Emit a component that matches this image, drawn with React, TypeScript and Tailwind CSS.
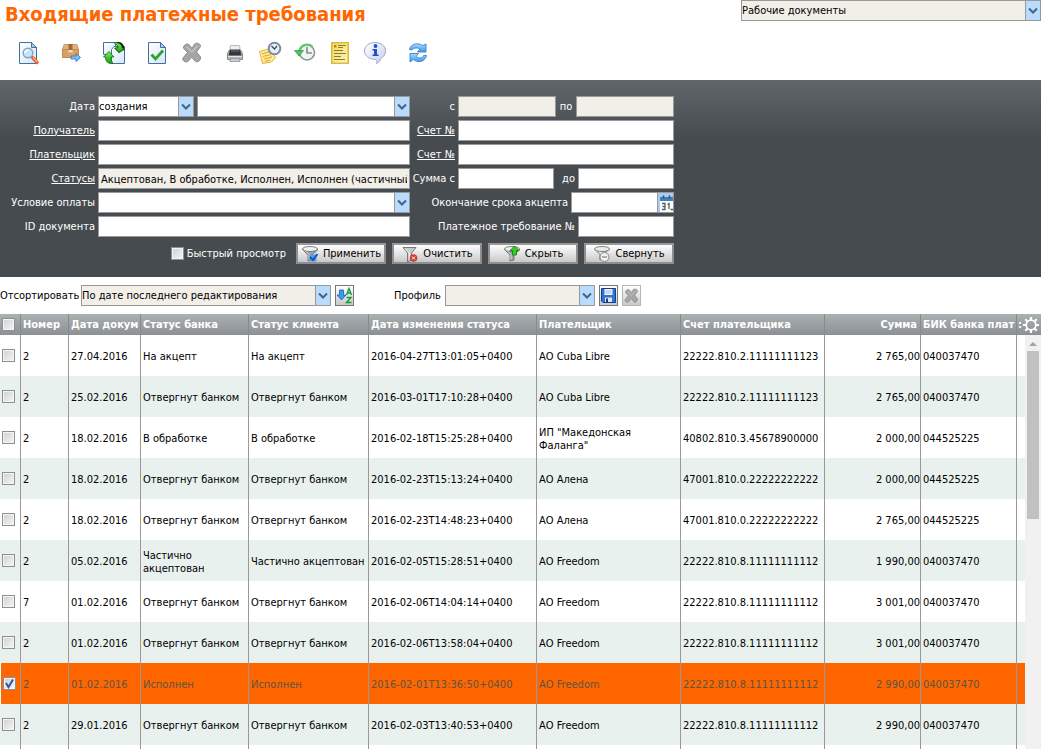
import { useState } from "react"
import type { ReactNode } from "react"
import clsx from "clsx"

type Payment = {
  id: number
  num: string
  date: string
  bankStatus: string
  clientStatus: string
  changed: string
  payer: string
  account: string
  sum: string
  bik: string
}

const payments: Payment[] = [
  { id: 1, num: "2", date: "27.04.2016", bankStatus: "На акцепт", clientStatus: "На акцепт", changed: "2016-04-27T13:01:05+0400", payer: "АО Cuba Libre", account: "22222.810.2.11111111123", sum: "2 765,00", bik: "040037470" },
  { id: 2, num: "2", date: "25.02.2016", bankStatus: "Отвергнут банком", clientStatus: "Отвергнут банком", changed: "2016-03-01T17:10:28+0400", payer: "АО Cuba Libre", account: "22222.810.2.11111111123", sum: "2 765,00", bik: "040037470" },
  { id: 3, num: "2", date: "18.02.2016", bankStatus: "В обработке", clientStatus: "В обработке", changed: "2016-02-18T15:25:28+0400", payer: "ИП \"Македонская Фаланга\"", account: "40802.810.3.45678900000", sum: "2 000,00", bik: "044525225" },
  { id: 4, num: "2", date: "18.02.2016", bankStatus: "Отвергнут банком", clientStatus: "Отвергнут банком", changed: "2016-02-23T15:13:24+0400", payer: "АО Алена", account: "47001.810.0.22222222222", sum: "2 000,00", bik: "044525225" },
  { id: 5, num: "2", date: "18.02.2016", bankStatus: "Отвергнут банком", clientStatus: "Отвергнут банком", changed: "2016-02-23T14:48:23+0400", payer: "АО Алена", account: "47001.810.0.22222222222", sum: "2 765,00", bik: "044525225" },
  { id: 6, num: "2", date: "05.02.2016", bankStatus: "Частично акцептован", clientStatus: "Частично акцептован", changed: "2016-02-05T15:28:51+0400", payer: "АО Freedom", account: "22222.810.8.11111111112", sum: "1 990,00", bik: "040037470" },
  { id: 7, num: "7", date: "01.02.2016", bankStatus: "Отвергнут банком", clientStatus: "Отвергнут банком", changed: "2016-02-06T14:04:14+0400", payer: "АО Freedom", account: "22222.810.8.11111111112", sum: "3 001,00", bik: "040037470" },
  { id: 8, num: "2", date: "01.02.2016", bankStatus: "Отвергнут банком", clientStatus: "Отвергнут банком", changed: "2016-02-06T13:58:04+0400", payer: "АО Freedom", account: "22222.810.8.11111111112", sum: "3 001,00", bik: "040037470" },
  { id: 9, num: "2", date: "01.02.2016", bankStatus: "Исполнен", clientStatus: "Исполнен", changed: "2016-02-01T13:36:50+0400", payer: "АО Freedom", account: "22222.810.8.11111111112", sum: "2 990,00", bik: "040037470" },
  { id: 10, num: "2", date: "29.01.2016", bankStatus: "Отвергнут банком", clientStatus: "Отвергнут банком", changed: "2016-02-03T13:40:53+0400", payer: "АО Freedom", account: "22222.810.8.11111111112", sum: "2 990,00", bik: "040037470" },
]

/* ---------- icons ---------- */

// gradients shared by the toolbar icons
const IconDefs = () => (
  <svg className="absolute" width="0" height="0" aria-hidden="true">
    <defs>
      <linearGradient id="g-page" x1="0" y1="0" x2="1" y2="1">
        <stop offset="0" stopColor="#ffffff" />
        <stop offset="1" stopColor="#d3e6f8" />
      </linearGradient>
      <linearGradient id="g-blue" x1="0" y1="0" x2="0" y2="1">
        <stop offset="0" stopColor="#a5dcfb" />
        <stop offset="1" stopColor="#3f94e6" />
      </linearGradient>
      <linearGradient id="g-green" x1="0" y1="0" x2="0" y2="1">
        <stop offset="0" stopColor="#7cf04c" />
        <stop offset="1" stopColor="#169b1f" />
      </linearGradient>
      <linearGradient id="g-yellow" x1="0" y1="0" x2="1" y2="1">
        <stop offset="0" stopColor="#f4dc5a" />
        <stop offset="1" stopColor="#fcf3bd" />
      </linearGradient>
      <linearGradient id="g-bubble" x1="0" y1="0" x2="1" y2="1">
        <stop offset="0" stopColor="#ffffff" />
        <stop offset="1" stopColor="#c9cdf2" />
      </linearGradient>
    </defs>
  </svg>
)

const DocPage = () => (
  <>
    <path d="M3.500 1.500h12l5 5v16h-17z" fill="url(#g-page)" stroke="#456f9e" />
    <path d="M15.500 1.500v5h5z" fill="#a9cdf0" stroke="#456f9e" />
  </>
)

const SearchDocIcon = () => (
  <svg width="24" height="24" viewBox="0 0 24 24">
    <DocPage />
    <path d="m17 17 4 4.500" stroke="#e5622b" strokeWidth="3.400" strokeLinecap="round" />
    <path d="m17 16.500 4 4.500" stroke="#f8b267" strokeWidth="1.200" />
    <path d="m15 15 1.500 1.500" stroke="#777" strokeWidth="2" />
    <circle cx="12" cy="12" r="4.800" fill="#bfe6fb" stroke="#8aa0b4" strokeWidth="1.400" />
    <path d="M9 12a3.500 3.500 0 0 1 3.500-3" stroke="#fff" strokeWidth="1.400" fill="none" />
  </svg>
)

const BoxIcon = () => (
  <svg width="24" height="24" viewBox="0 0 24 24">
    <path d="M5 3.500h13l1.500 5h-16z" fill="#e3b27a" stroke="#cf9c62" strokeLinejoin="round" />
    <path d="M3.500 8.500h16v8h-16z" fill="#d8a163" stroke="#c58b4c" strokeLinejoin="round" />
    <path d="M9.500 3h4v6h-4z" fill="#9b6a3f" />
    <path d="M9.500 9h4v3l-2-1-2 1z" fill="#f3dfc2" />
    <path d="M12 15h5v-2.500l4.500 4-4.500 4V18h-5z" fill="#7fbdf3" stroke="#3877bd" strokeWidth=".9" />
  </svg>
)

const SwapIcon = () => (
  <svg width="24" height="24" viewBox="0 0 24 24">
    <path d="M1.500 1.500h12v12h-12z" fill="url(#g-page)" stroke="#456f9e" />
    <path d="M9.500 8.500 12 5.500h10.500v17h-13z" fill="url(#g-page)" stroke="#456f9e" />
    <path d="M11 1h6c4 .5 5.500 4 5.500 9l-1-1-4.500 3-5-5 3.500-.5C15.500 4.500 14 2 11 1z" fill="#0b1a0b" />
    <path d="M11.500 1.500c5 0 8.500 1.500 8.500 5.500l2 .5-4.500 4L13 7h3c0-2.500-1.500-4-4.500-5.500z" fill="url(#g-green)" stroke="#137a17" strokeWidth=".7" />
    <path d="M11.500 22.500c-4.500.5-8-1-8-6.500H1.500l5.500-5.500L12 16H9c0 3 .5 5 2.500 6.500z" fill="url(#g-green)" stroke="#137a17" strokeWidth=".9" />
  </svg>
)

const CheckDocIcon = () => (
  <svg width="24" height="24" viewBox="0 0 24 24">
    <DocPage />
    <path d="m6.500 13.500 4 4.500L18 9.500" fill="none" stroke="#2da52a" strokeWidth="2.800" />
  </svg>
)

const CrossIcon = ({ size = 24 }: { size?: number }) => (
  <svg width={size} height={size} viewBox="0 0 24 24">
    <path d="M3.500 7C3.500 4 6.500 2 9 3.500l3 4L14.500 3C17 1 21 3 20.500 5.500L16.500 11l4 5c.5 3.500-2.500 5.500-5 4.500l-4-4.500-3.500 4.500C5 22 2 19.500 3 17l4.500-5.500z" fill="#a6a6a6" stroke="#8c8c8c" strokeLinejoin="round" />
    <path d="M6.500 5.500 12 11l5.500-6" fill="none" stroke="#c6c6c6" strokeWidth="1.200" />
  </svg>
)

const PrinterIcon = () => (
  <svg width="24" height="24" viewBox="0 0 24 24">
    <path d="M7.500 4.500h9l1 6h-11z" fill="#eaf0f6" stroke="#b5bcc4" />
    <path d="M4.500 12.500 6 9.500h12l1.500 3v6h-15z" fill="#b4b7bb" stroke="#84878b" />
    <path d="M7 8.500h10l1.500 6h-13z" fill="#34373b" />
    <path d="M8 10h8" stroke="#6a7078" />
    <path d="M5 15.500h14" stroke="#e2e4e6" />
    <path d="M7.500 17.500h9l.5 3H7z" fill="#c8ccd1" stroke="#8f9397" strokeWidth=".8" />
  </svg>
)

const NoteClockIcon = () => (
  <svg width="24" height="24" viewBox="0 0 24 24">
    <path d="m1.500 10.500 11-3 5 9-4 4.500-9 1.500z" fill="#fdeb8e" stroke="#e6b549" />
    <path d="m4 13 8-2.500M5 15.500l8-2M6 18l8-2M7 20.500l5-1.500" stroke="#dba336" />
    <circle cx="16.500" cy="7.500" r="5.800" fill="#e6f0fc" stroke="#7d8ba3" strokeWidth="2" />
    <path d="m13.500 5 3 3 2.500-3" fill="none" stroke="#3a4552" strokeWidth="1.200" />
  </svg>
)

const HistoryIcon = () => (
  <svg width="24" height="24" viewBox="0 0 24 24">
    <circle cx="14" cy="11.500" r="7.500" fill="#eff5f1" stroke="#8a958d" strokeWidth="1.600" />
    <path d="M14 6v6h5" fill="none" stroke="#5f6661" strokeWidth="1.200" />
    <path d="M19.500 5.500C16 2.500 8.500 2.500 6 10" fill="none" stroke="#63c672" strokeWidth="2.200" />
    <path d="M1.500 9.500h9L6 15z" fill="#4fc463" stroke="#2f9d45" strokeWidth=".8" />
  </svg>
)

const FormIcon = () => (
  <svg width="24" height="24" viewBox="0 0 24 24">
    <path d="M3.800 1.800h16.400v20.400H3.800z" fill="url(#g-yellow)" stroke="#d9bd3c" strokeWidth="1.600" />
    <path d="M10 4.500h8M10 6.500h5M6 9.500h9M6 12.500h12M6 15.500h7M6 18.500h11" stroke="#8a7d31" strokeWidth="1.200" />
    <path d="M6 4h2.500v2.500H6z" fill="#b08f18" />
  </svg>
)

const InfoIcon = () => (
  <svg width="24" height="24" viewBox="0 0 24 24">
    <path d="M12 1.500c6 0 10.500 3.500 10.500 8 0 4-2 6.500-5 8 0 2-1.500 4-4 5 .5-1.500.5-3-.5-4C6.500 18.500 1.500 15 1.500 10S6 1.500 12 1.500z" fill="url(#g-bubble)" stroke="#a3a6c9" />
    <circle cx="12.500" cy="5" r="1.900" fill="#1b50cf" />
    <path d="M9.500 8H14v5.500h1.500V15h-6v-1.500H11v-4H9.500z" fill="#1b50cf" />
  </svg>
)

const RefreshIcon = () => (
  <svg width="24" height="24" viewBox="0 0 24 24">
    <path d="M3.500 8.500c1-5.500 8.500-7.500 13-4l3.500-1.500v8h-8.500L14 8C10.500 6 7 7 6 9z" fill="url(#g-blue)" stroke="#3785d2" strokeLinejoin="round" strokeWidth=".9" />
    <path d="M20.500 14.500c-1 6-8.500 8-13 4L4 21v-8.500h8.500L10 15.500c3 2.500 6.500 1.500 7.500-1z" fill="url(#g-blue)" stroke="#3785d2" strokeLinejoin="round" strokeWidth=".9" />
  </svg>
)

const Funnel = () => (
  <>
    <path d="M1.500 4.500 7 10v6l4-1v-5l6-5.500z" fill="#9aa0a5" stroke="#63686c" strokeWidth=".8" />
    <ellipse cx="9" cy="4" rx="7.500" ry="2.500" fill="#eef0f1" stroke="#63686c" strokeWidth=".8" />
    <path d="M4 5.500 8 9.500v5" fill="none" stroke="#d9dcde" />
  </>
)

const ApplyIcon = () => (
  <svg width="18" height="18" viewBox="0 0 18 18">
    <Funnel />
    <path d="M8.500 9.500h7v7h-7z" fill="#5d9be8" />
    <path d="m9 12 3 3 4.500-6" fill="none" stroke="#1457b8" strokeWidth="2" />
  </svg>
)

const ClearIcon = () => (
  <svg width="18" height="18" viewBox="0 0 18 18">
    <path d="M2 2.500h13L10.500 8v7l-4 2V8z" fill="#c9cccf" stroke="#777" />
    <path d="m4.500 4 4 4.500V14" fill="none" stroke="#f7f7f7" />
    <circle cx="12.500" cy="13" r="3.800" fill="#cf3a3a" />
    <path d="m11 11.500 3 3m0-3-3 3" stroke="#fff" />
  </svg>
)

const HideIcon = () => (
  <svg width="18" height="18" viewBox="0 0 18 18">
    <Funnel />
    <path d="m11.500 1 4.500 4.500h-2.500V10h-4V5.500H7z" fill="#35d01e" stroke="#11770f" strokeWidth=".8" />
  </svg>
)

const CollapseIcon = () => (
  <svg width="18" height="18" viewBox="0 0 18 18">
    <path d="M1.500 4 7 9.500V15l3-1M16.500 4 11 8.500" fill="none" stroke="#777" />
    <ellipse cx="9" cy="4" rx="7.500" ry="2.500" fill="#e9ebec" stroke="#777" strokeWidth=".9" />
    <circle cx="11.500" cy="12" r="4.500" fill="#f1f1f1" stroke="#858585" />
    <path d="M9 12h5" stroke="#666" />
  </svg>
)

const SortIcon = () => (
  <svg width="17" height="17" viewBox="0 0 17 17">
    <path d="M3.500 3h4v5h2.500L5.500 13 1 8h2.500z" fill="#3c9af0" stroke="#1661b8" strokeWidth=".8" />
    <path d="m10.500 8 2.500-6.500L15.500 8M11.500 6h3M10.500 10.500h4.500l-4.500 5h5" fill="none" stroke="#169a35" strokeWidth="1.400" />
  </svg>
)

const SaveIcon = () => (
  <svg width="17" height="17" viewBox="0 0 17 17">
    <path d="M1.500 1.500h14v14H3l-1.500-1.500z" fill="#2f74d4" stroke="#123f8c" />
    <path d="M4.500 2h8v6h-8z" fill="#f4f7fb" />
    <path d="M5.500 4h6M5.500 6h6" stroke="#a7b5c7" />
    <path d="M5 10.500h7V15H5z" fill="#dde5ef" />
    <path d="M6 11.500h2V15H6z" fill="#173f7f" />
  </svg>
)

const CalendarIcon = () => (
  <svg width="15" height="19" viewBox="0 0 15 19">
    <path d="M0 0h15v19H0z" fill="#a9cdf2" />
    <path d="M2 7h13v12H2z" fill="#fff" />
    <path d="M2 4h13v4H2z" fill="#3b83b8" />
    <path d="M5.500 2.500v3M11.500 2.500v3" stroke="#35556f" strokeWidth="1.600" />
    <path d="M4 10.500h3v6H4M4.500 13.500H7M9.500 11.500l1.500-1V16M12.500 16.500H15" fill="none" stroke="#555b60" strokeWidth="1.300" />
  </svg>
)

const GearIcon = () => (
  <svg width="18" height="18" viewBox="0 0 18 18" fill="none" stroke="#fff">
    <circle cx="9" cy="9" r="4.800" strokeWidth="1.800" />
    <path d="M9 1v3M9 14v3M1 9h3M14 9h3M3.300 3.300l2.200 2.200M12.500 12.500l2.200 2.200M3.300 14.700l2.200-2.200M12.500 5.500l2.200-2.200" strokeWidth="2.200" />
  </svg>
)

/* ---------- controls ---------- */

const Select = ({ id, label, options, className, muted }: {
  id?: string
  label?: string
  options: string[]
  className?: string
  muted?: boolean
}) => (
  <span className={clsx("relative inline-block h-[21px]", className)}>
    <select
      id={id}
      aria-label={label}
      className={clsx(
        "block h-full w-full appearance-none border border-[#999] pt-px pr-4 text-black outline-none",
        muted ? "bg-[#f2eee8]" : "bg-white"
      )}
    >
      {options.map((o) => <option key={o}>{o}</option>)}
    </select>
    <span className="pointer-events-none absolute inset-y-px right-px flex w-[15px] items-center justify-center border-l border-[#999] bg-[#b9dcfc]">
      <svg width="10" height="8" viewBox="0 0 10 8">
        <path d="m1 1.500 4 4 4-4" fill="none" stroke="#456089" strokeWidth="2" />
      </svg>
    </span>
  </span>
)

const TextBox = ({ id, label, value = "", className, muted }: {
  id?: string
  label?: string
  value?: string
  className?: string
  muted?: boolean
}) => (
  <input
    id={id}
    type="text"
    aria-label={label}
    defaultValue={value}
    readOnly={muted}
    className={clsx(
      "h-[21px] min-w-0 border border-[#999] px-0.5 pt-px text-black outline-none",
      muted ? "bg-[#f2eee8]" : "bg-white",
      className
    )}
  />
)

const Check = ({ id, label, checked, onChange }: {
  id?: string
  label?: string
  checked: boolean
  onChange: () => void
}) => (
  <span className="relative block size-[13px] shrink-0">
    <input
      id={id}
      type="checkbox"
      aria-label={label}
      checked={checked}
      onChange={onChange}
      className="peer block size-[13px] appearance-none border border-[#8e8f8f] bg-linear-to-br from-[#cdd0d3] to-[#f6f6f6] shadow-[inset_0_0_0_1px_#f4f4f4]"
    />
    <svg className="pointer-events-none absolute inset-0 hidden peer-checked:block" width="13" height="13" viewBox="0 0 13 13">
      <path d="m3 6 2.500 4L10 2.500" fill="none" stroke="#37559c" strokeWidth="2" />
    </svg>
  </span>
)

const ToolButton = ({ title, children }: { title: string; children: ReactNode }) => (
  <button type="button" aria-label={title} className="flex size-6 items-center justify-center">
    {children}
  </button>
)

const PanelButton = ({ icon, children }: { icon: ReactNode; children: ReactNode }) => (
  <button
    type="button"
    className="flex h-[21px] w-[90px] items-center justify-center gap-1 border-2 border-[#8f8f8f] border-t-[#999] bg-linear-to-b from-white to-[#c9c9c9] text-black"
  >
    {icon}
    <span>{children}</span>
  </button>
)

const SmallButton = ({ title, disabled, children }: { title: string; disabled?: boolean; children: ReactNode }) => (
  <button
    type="button"
    aria-label={title}
    disabled={disabled}
    className={clsx(
      "flex h-[21px] w-[19px] items-center justify-center border bg-linear-to-b from-white to-[#c9c9c9]",
      disabled ? "border-[#b5b5b5]" : "border-[#777]"
    )}
  >
    {children}
  </button>
)

const Toolbar = () => (
  <div className="flex gap-[19px] px-4">
    <ToolButton title="Просмотр"><SearchDocIcon /></ToolButton>
    <ToolButton title="В архив"><BoxIcon /></ToolButton>
    <ToolButton title="Перенос"><SwapIcon /></ToolButton>
    <div className="flex gap-[11px]">
      <ToolButton title="Акцептовать"><CheckDocIcon /></ToolButton>
      <ToolButton title="Отказать"><CrossIcon /></ToolButton>
    </div>
    <div className="flex gap-[11px]">
      <ToolButton title="Печать"><PrinterIcon /></ToolButton>
      <ToolButton title="Напоминание"><NoteClockIcon /></ToolButton>
      <ToolButton title="История"><HistoryIcon /></ToolButton>
      <ToolButton title="Реестр"><FormIcon /></ToolButton>
      <ToolButton title="Информация"><InfoIcon /></ToolButton>
    </div>
    <ToolButton title="Обновить"><RefreshIcon /></ToolButton>
  </div>
)

const rowClass = "flex items-center justify-end gap-[3px]"

const FilterPanel = () => {
  const [quick, setQuick] = useState(false)

  return (
    <form className="shrink-0 bg-[#464b4f] bg-linear-to-b from-[#61666b] to-[#464b4f] to-30% pt-4 pb-[13px] text-white">
      <div className="grid grid-cols-[410px_264px] gap-y-[3px]">
        <div className={rowClass}>
          <label htmlFor="date-kind">Дата</label>
          <Select id="date-kind" options={["создания", "документа"]} className="w-24" />
          <Select label="Период" options={[""]} className="w-[213px]" />
        </div>
        <div className={rowClass}>
          <label htmlFor="date-from">с</label>
          <TextBox id="date-from" className="w-[98px]" muted />
          <label htmlFor="date-to" className="w-[14px] text-center">по</label>
          <TextBox id="date-to" className="w-[98px]" muted />
        </div>

        <div className={rowClass}>
          <a href="#recipient" className="underline">Получатель</a>
          <TextBox label="Получатель" className="w-[312px]" />
        </div>
        <div className={rowClass}>
          <a href="#recipient-account" className="underline">Счет №</a>
          <TextBox label="Счет получателя" className="w-[216px]" />
        </div>

        <div className={rowClass}>
          <a href="#payer" className="underline">Плательщик</a>
          <TextBox label="Плательщик" className="w-[312px]" />
        </div>
        <div className={rowClass}>
          <a href="#payer-account" className="underline">Счет №</a>
          <TextBox label="Счет плательщика" className="w-[216px]" />
        </div>

        <div className={rowClass}>
          <a href="#statuses" className="underline">Статусы</a>
          <TextBox
            label="Статусы"
            value="Акцептован, В обработке, Исполнен, Исполнен (частичный акцепт)"
            className="w-[312px]"
            muted
          />
        </div>
        <div className={rowClass}>
          <label htmlFor="sum-from">Сумма с</label>
          <TextBox id="sum-from" className="w-24" />
          <label htmlFor="sum-to" className="w-[18px] text-right">до</label>
          <TextBox id="sum-to" className="w-24" />
        </div>

        <div className={rowClass}>
          <label htmlFor="condition">Условие оплаты</label>
          <Select id="condition" options={[""]} className="w-[312px]" />
        </div>
        <div className={rowClass}>
          <label htmlFor="accept-till">Окончание срока акцепта</label>
          <div className="flex w-[103px]">
            <TextBox id="accept-till" className="flex-1 border-r-0" />
            <button type="button" aria-label="Календарь" className="border border-[#999]">
              <CalendarIcon />
            </button>
          </div>
        </div>

        <div className={rowClass}>
          <label htmlFor="doc-id">ID документа</label>
          <TextBox id="doc-id" className="w-[312px]" />
        </div>
        <div className={rowClass}>
          <label htmlFor="request-num">Платежное требование №</label>
          <TextBox id="request-num" className="w-24" />
        </div>
      </div>

      <div className="mt-1.5 flex w-[674px] items-center justify-end gap-1.5">
        <div className="mr-1 flex items-center gap-[3px]">
          <Check id="quick" checked={quick} onChange={() => setQuick(!quick)} />
          <label htmlFor="quick">Быстрый просмотр</label>
        </div>
        <PanelButton icon={<ApplyIcon />}>Применить</PanelButton>
        <PanelButton icon={<ClearIcon />}>Очистить</PanelButton>
        <PanelButton icon={<HideIcon />}>Скрыть</PanelButton>
        <PanelButton icon={<CollapseIcon />}>Свернуть</PanelButton>
      </div>
    </form>
  )
}

const SortBar = () => (
  <div className="flex h-[37px] shrink-0 items-center gap-1">
    <label htmlFor="sort" className="w-[77px] whitespace-nowrap">Отсортировать</label>
    <Select id="sort" options={["По дате последнего редактирования"]} className="w-[250px]" muted />
    <SmallButton title="Направление сортировки"><SortIcon /></SmallButton>
    <label htmlFor="profile" className="ml-9 w-[47px]">Профиль</label>
    <Select id="profile" options={[""]} className="w-[150px]" muted />
    <SmallButton title="Сохранить профиль"><SaveIcon /></SmallButton>
    <SmallButton title="Удалить профиль" disabled><CrossIcon size={18} /></SmallButton>
  </div>
)

const thClass = "overflow-hidden border-r border-[#8a8a8a] px-0.5 text-left whitespace-nowrap"
const tdClass = "border-r border-[#999] pl-0.5"
const textCell = clsx(tdClass, "pt-0.5")

const PaymentsTable = () => {
  const [selected, setSelected] = useState<number[]>([9])

  const toggle = (id: number) => {
    setSelected((prev) => prev.includes(id) ? prev.filter((x) => x !== id) : [...prev, id])
  }
  const allSelected = selected.length === payments.length

  return (
    <div className="relative min-h-0 flex-1 overflow-hidden">
      <table className="w-full table-fixed border-separate border-spacing-0">
        <colgroup>
          <col className="w-[21px]" />
          <col className="w-12" />
          <col className="w-[72px]" />
          <col className="w-[108px]" />
          <col className="w-[120px]" />
          <col className="w-[168px]" />
          <col className="w-36" />
          <col className="w-36" />
          <col className="w-24" />
          <col className="w-24" />
          <col />
        </colgroup>
        <thead>
          <tr className="h-[21px] bg-linear-to-b from-[#abb0b3] to-[#8c9195] text-white">
            <th className={thClass}>
              <Check
                label="Выбрать все"
                checked={allSelected}
                onChange={() => setSelected(allSelected ? [] : payments.map((p) => p.id))}
              />
            </th>
            <th className={thClass}>Номер</th>
            <th className={thClass}>Дата докум</th>
            <th className={thClass}>Статус банка</th>
            <th className={thClass}>Статус клиента</th>
            <th className={thClass}>Дата изменения статуса</th>
            <th className={thClass}>Плательщик</th>
            <th className={thClass}>Счет плательщика</th>
            <th className="overflow-hidden border-r border-[#8a8a8a] pr-[3px] text-right">Сумма</th>
            <th className={thClass}>БИК банка плат</th>
            <th className="overflow-hidden">
              <div className="flex items-center justify-between pr-px pl-px">
                <span>:</span>
                <button type="button" aria-label="Настройка колонок" className="shrink-0">
                  <GearIcon />
                </button>
              </div>
            </th>
          </tr>
        </thead>
        <tbody>
          {payments.map((p) => {
            const isSelected = selected.includes(p.id)
            return (
              <tr
                key={p.id}
                className={clsx(
                  "h-[41px] leading-[13px]",
                  isSelected ? "bg-[#ff6600] text-[#5c5540]" : "text-black odd:bg-white even:bg-[#e9f1ee]"
                )}
              >
                <td className={clsx(tdClass, isSelected && "border-l border-l-white")}>
                  <Check label={`Выбрать документ ${p.num}`} checked={isSelected} onChange={() => toggle(p.id)} />
                </td>
                <td className={textCell}>{p.num}</td>
                <td className={textCell}>{p.date}</td>
                <td className={textCell}>{p.bankStatus}</td>
                <td className={textCell}>{p.clientStatus}</td>
                <td className={textCell}>{p.changed}</td>
                <td className={textCell}>{p.payer}</td>
                <td className={textCell}>{p.account}</td>
                <td className="border-r border-[#999] pt-0.5 text-right">{p.sum}</td>
                <td className={textCell}>{p.bik}</td>
                <td />
              </tr>
            )
          })}
          <tr className="h-[41px]">
            {Array.from({ length: 10 }, (_, i) => <td key={i} className={tdClass} />)}
            <td />
          </tr>
        </tbody>
      </table>

      <div className="absolute top-[21px] right-0 bottom-0 flex w-4 flex-col items-center bg-[#f1f1f1]">
        <svg className="shrink-0" width="16" height="16" viewBox="0 0 16 16">
          <path d="m4 11 4-4 4 4z" fill="#a3a3a3" />
        </svg>
        <div className="h-[168px] w-3 bg-[#c1c1c1]" />
      </div>
    </div>
  )
}

const App = () => {
  return (
    <div className="flex h-screen flex-col overflow-hidden bg-white font-['DejaVu_Sans_Condensed','Noto_Sans',sans-serif] text-[11px] leading-[14px] text-black">
      <IconDefs />
      <header className="h-20 shrink-0">
        <div className="flex h-[41px] items-start justify-between">
          <h1 className="pl-[5px] text-[20px] leading-7 font-bold text-[#ff6600]">
            Входящие платежные требования
          </h1>
          <Select label="Раздел" options={["Рабочие документы"]} className="w-[300px]" muted />
        </div>
        <Toolbar />
      </header>
      <FilterPanel />
      <SortBar />
      <PaymentsTable />
    </div>
  )
}

export default App
